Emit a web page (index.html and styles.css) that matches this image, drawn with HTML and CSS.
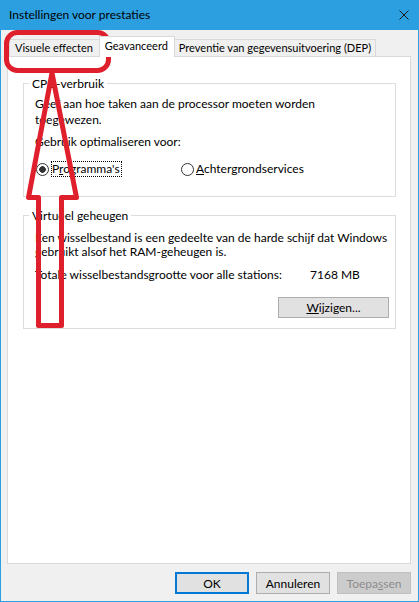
FILE: index.html
```html
<!DOCTYPE html>
<html lang="nl">
<head>
    <meta charset="UTF-8">
    <meta name="viewport" content="width=device-width, initial-scale=1.0">
    <title>Instellingen voor prestaties</title>
    <link rel="stylesheet" href="styles.css">
</head>
<body>
    <div class="window">
        <div class="titlebar">
            <span class="title">Instellingen voor prestaties</span>
            <svg class="close" width="10" height="10" viewBox="0 0 10 10">
                <path d="M0.5 0.5 L9.5 9.5 M9.5 0.5 L0.5 9.5" stroke="#1a1a1a" stroke-width="1" fill="none"/>
            </svg>
        </div>

        <div class="dialog">
            <div class="tabs">
                <div class="tab first">Visuele effecten</div>
                <div class="tab active">Geavanceerd</div>
                <div class="tab">Preventie van gegevensuitvoering (DEP)</div>
            </div>

            <div class="panel">
                <fieldset class="group cpu">
                    <legend>CPU-verbruik</legend>
                    <p class="text">Geef aan hoe taken aan de processor moeten worden<br>toegewezen.</p>
                    <p class="text label">Gebruik optimaliseren voor:</p>
                    <div class="radios">
                        <div class="radio first">
                            <span class="dot checked"></span>
                            <span class="focus">P<u>r</u>ogramma's</span>
                        </div>
                        <div class="radio">
                            <span class="dot"></span>
                            <span><u>A</u>chtergrondservices</span>
                        </div>
                    </div>
                </fieldset>

                <fieldset class="group vm">
                    <legend>Virtueel geheugen</legend>
                    <p class="text">Een wisselbestand is een gedeelte van de harde schijf dat Windows<br>gebruikt alsof het RAM-geheugen is.</p>
                    <div class="stat">
                        <span>Totale wisselbestandsgrootte voor alle stations:</span>
                        <span>7168 MB</span>
                    </div>
                    <div class="change-row">
                        <button class="btn wide"><u>W</u>ijzigen...</button>
                    </div>
                </fieldset>
            </div>

            <div class="buttons">
                <button class="btn default">OK</button>
                <button class="btn">Annuleren</button>
                <button class="btn" disabled>Toepa<u>s</u>sen</button>
            </div>
        </div>

        <!-- red markup drawn over the screenshot -->
        <svg class="annotation" width="419" height="602" viewBox="0 0 419 602">
            <rect x="5.5" y="32.5" width="102" height="38" rx="11" ry="11"/>
            <path d="M51 73 L27.5 197.5 L37.5 197.5 L37.5 325.5 L60.5 325.5 L60.5 197.5 L75.5 197.5 Z"/>
        </svg>
    </div>
</body>
</html>
```

FILE: styles.css
```css
* {
    box-sizing: border-box;
}
body {
    margin: 0;
    font-family: Lato, "Noto Sans", sans-serif;
    font-size: 12px;
    color: #000;
}
.window {
    position: relative;
    width: 419px;
    height: 602px;
    border: 1px solid #2b9fe0;
    border-top: 0;
    background: #f0f0f0;
    display: flex;
    flex-direction: column;
}
.titlebar {
    height: 30px;
    flex-shrink: 0;
    background: #2b9fe0;
    display: flex;
    align-items: center;
    justify-content: space-between;
    padding: 0 9px 0 8px;
    line-height: 30px;
}
.close {
    display: block;
}
.dialog {
    flex: 1;
    display: flex;
    flex-direction: column;
    padding: 6px 7px 7px 6px;
}
.tabs {
    display: flex;
    align-items: flex-end;
    height: 20px;
    flex-shrink: 0;
    padding-left: 2px;
    font-size: 11px;
}
.tab {
    height: 17px;
    line-height: 16px;
    border: 1px solid #d9d9d9;
    border-bottom: 0;
    padding: 0 4px;
    margin-right: -1px;
    background: #f0f0f0;
    white-space: nowrap;
}
.tab.first {
    padding: 0 6px 0 5px;
}
.tab.active {
    position: relative;
    z-index: 1;
    height: 21px;
    margin-bottom: -1px;
    padding: 1px 6px 0 5px;
    background: #fff;
}
.panel {
    flex: 1;
    background: #fff;
    border: 1px solid #d9d9d9;
    padding: 0 14px 0 15px;
}
.group {
    margin: 19px 0 0;
    padding: 5px 6px 19px 11px;
    border: 1px solid #dcdcdc;
    min-width: 0;
}
.group legend {
    padding: 0 3px;
    margin-left: -6px;
    line-height: 15px;
}
.text {
    margin: 0;
    line-height: 16px;
    white-space: nowrap;
}
.label {
    margin-top: 6px;
}
.radios {
    display: flex;
    margin-top: 11px;
    line-height: 16px;
}
.radio {
    display: flex;
    align-items: center;
}
.radio.first {
    width: 145px;
}
.dot {
    width: 13px;
    height: 13px;
    border: 1px solid #333;
    border-radius: 50%;
    background: #fff;
    margin: 0 2px 0 1px;
}
.dot.checked {
    background: radial-gradient(circle, #333 3px, #fff 3.6px);
}
.focus {
    border: 1px dotted #000;
    padding-right: 1px;
    line-height: 14px;
}
.vm {
    margin-top: 11px;
    padding: 8px 6px 10px 11px;
}
.vm .text {
    line-height: 14px;
}
.stat {
    display: grid;
    grid-template-columns: 275px auto;
    margin-top: 8px;
    line-height: 16px;
}
.change-row {
    display: flex;
    justify-content: flex-end;
    margin-top: 14px;
}
.btn {
    width: 74px;
    height: 22px;
    border: 1px solid #adadad;
    background: #e1e1e1;
    font: inherit;
    color: #000;
    padding: 0;
    text-align: center;
}
.btn.wide {
    width: 111px;
    height: 21px;
}
.btn.default {
    border-color: #0078d7;
    box-shadow: inset 0 0 0 1px #0078d7;
}
.btn:disabled {
    background: #cccccc;
    border-color: #bfbfbf;
    color: #8d8d8d;
}
.buttons {
    display: flex;
    justify-content: flex-end;
    gap: 7px;
    margin-top: 8px;
    flex-shrink: 0;
}
.annotation {
    position: absolute;
    top: 0;
    left: 0;
    pointer-events: none;
    fill: none;
    stroke: #e01f2d;
    stroke-width: 5;
    stroke-linejoin: round;
}
```
